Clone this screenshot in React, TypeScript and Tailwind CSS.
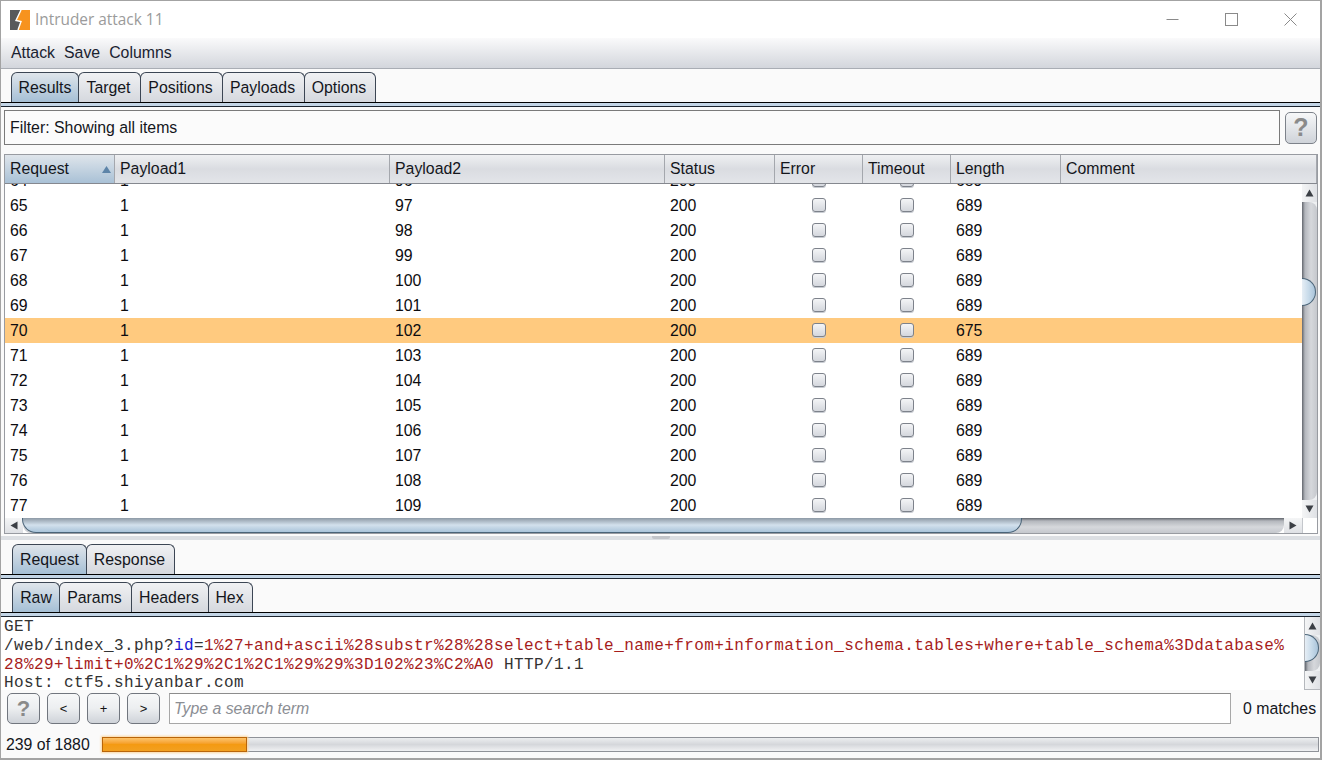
import React from "react";

const tabBase = "h-[30px] -mr-px border border-b-0 border-[#3c4654] rounded-t-[6px] flex items-center justify-center leading-none";
const tabOff = "bg-gradient-to-b from-[#f0f1f3] to-[#d5d8de] text-[#14161c] pr-[2px]";
const tabOn = "bg-gradient-to-b from-[#dfe5eb] to-[#a5bfd5] text-[#14161c] relative z-10";

function Tabs({ items, ml }: { items: [string, number][]; ml: string }) {
  return (
    <div className={`flex items-end ${ml}`}>
      {items.map(([t, w], i) => (
        <div key={t} className={`${tabBase} ${i === 0 ? tabOn : tabOff}`} style={{ width: w }}>
          {t}
        </div>
      ))}
    </div>
  );
}

function TabRule() {
  return <div className="h-[5px] border-t border-b border-t-black border-b-[#1c2530] bg-[#c3d5e6]" />;
}

const cols = [
  ["Request", 111],
  ["Payload1", 275],
  ["Payload2", 275],
  ["Status", 110],
  ["Error", 88],
  ["Timeout", 88],
  ["Length", 110],
  ["Comment", 257],
] as [string, number][];

const rows = Array.from({ length: 14 }, (_, i) => ({
  id: 64 + i,
  p2: 96 + i,
  len: 64 + i === 70 ? 675 : 689,
}));

function Check() {
  return (
    <span className="block -mt-px w-[14px] h-[14px] rounded-[3px] border border-[#7d828b] bg-gradient-to-b from-[#f4f5f7] to-[#d4d7dd] shadow-[0_1px_0_#c8ccd2]" />
  );
}

function Btn({ children, w = 33 }: { children: React.ReactNode; w?: number }) {
  return (
    <div
      className="h-[31px] rounded-[5px] border border-[#71767e] bg-gradient-to-b from-[#f7f8f9] via-[#eceef0] to-[#cfd3d9] flex items-center justify-center text-[#111] text-[13px] leading-none"
      style={{ width: w }}
    >
      {children}
    </div>
  );
}

function Q({ size }: { size: string }) {
  return <span className={`font-bold text-[#8a8a8a] leading-none ${size}`}>?</span>;
}

function ArrowUp() {
  return (
    <svg width="9" height="8" viewBox="0 0 9 8">
      <path d="M4.5 0.5 L8.5 7.5 L0.5 7.5 Z" fill="#3b3f45" />
    </svg>
  );
}
function ArrowDown() {
  return (
    <svg width="9" height="8" viewBox="0 0 9 8">
      <path d="M0.5 0.5 L8.5 0.5 L4.5 7.5 Z" fill="#3b3f45" />
    </svg>
  );
}
function ArrowLeft() {
  return (
    <svg width="8" height="9" viewBox="0 0 8 9">
      <path d="M7.5 0.5 L7.5 8.5 L0.5 4.5 Z" fill="#3b3f45" />
    </svg>
  );
}
function ArrowRight() {
  return (
    <svg width="8" height="9" viewBox="0 0 8 9">
      <path d="M0.5 0.5 L7.5 4.5 L0.5 8.5 Z" fill="#3b3f45" />
    </svg>
  );
}

function VScroll({ top }: { top: number }) {
  return (
    <div className="relative w-[15px] h-full flex flex-col shrink-0 bg-[#eef0f2]">
      <div className="h-[18px] flex items-center justify-center shrink-0 bg-gradient-to-r from-[#f4f5f6] to-[#dfe1e5]">
        <ArrowUp />
      </div>
      <div className="flex-1 rounded-tr-[8px] rounded-br-[8px] bg-[linear-gradient(to_right,#63676e,#b4b7bd_20%,#d6d8dc_60%,#c5c8cd)]" />
      <div className="h-[18px] flex items-center justify-center shrink-0 bg-gradient-to-r from-[#f4f5f6] to-[#dfe1e5]">
        <ArrowDown />
      </div>
      <div
        className="absolute left-0 w-[14px] h-[28px] rounded-r-[14px] border border-l-0 border-[#4a6478] bg-gradient-to-r from-[#e6eef5] via-[#c8dbea] to-[#aac4da]"
        style={{ top }}
      />
    </div>
  );
}

export default function App() {
  return (
    <div
      className="w-[1322px] h-[760px] overflow-hidden flex flex-col bg-[#fafafa] border-2 border-t border-[#a3a3a3] text-[15.85px] text-[#14161c]"
      style={{ fontFamily: '"Liberation Sans", Arial, sans-serif', borderLeftWidth: 1 }}
    >
      {/* Title bar */}
      <div className="h-[37px] shrink-0 bg-white flex items-center pl-[9px]">
        <svg width="20" height="20" viewBox="0 0 20 20" className="shrink-0">
          <rect width="20" height="20" fill="#59595b" />
          <path d="M11 0 H20 V20 H8 L11 11.5 L6 10.5 Z" fill="#f7931e" />
          <path d="M11 0 L6 10.5 L11 11.5 L8 20" fill="none" stroke="#fff" strokeWidth="1.4" />
        </svg>
        <span
          className="ml-[5px] text-[#9b9b9b] text-[15.4px]"
          style={{ fontFamily: '"Open Sans", "Noto Sans", sans-serif' }}
        >
          Intruder attack 11
        </span>
        <div className="ml-auto flex items-center mr-[23px] gap-[46px]">
          <svg width="13" height="13" viewBox="0 0 13 13">
            <path d="M0.5 6.5 H12.5" stroke="#8a8a8a" />
          </svg>
          <svg width="13" height="13" viewBox="0 0 13 13">
            <rect x="0.5" y="0.5" width="12" height="12" fill="none" stroke="#8a8a8a" />
          </svg>
          <svg width="13" height="13" viewBox="0 0 13 13">
            <path d="M0.5 0.5 L12.5 12.5 M12.5 0.5 L0.5 12.5" stroke="#8a8a8a" />
          </svg>
        </div>
      </div>

      {/* Menu */}
      <div className="h-[31px] shrink-0 flex items-center pl-[10px] gap-[9px] bg-gradient-to-b from-[#fafafb] to-[#d3d6dc] border-b border-[#a9adb4] text-[#1a2230]">
        <span>Attack</span>
        <span>Save</span>
        <span>Columns</span>
      </div>

      {/* Main tabs */}
      <div className="pt-[3px] shrink-0">
        <Tabs
          ml="ml-[10px]"
          items={[
            ["Results", 68],
            ["Target", 63],
            ["Positions", 83],
            ["Payloads", 83],
            ["Options", 72],
          ]}
        />
        <TabRule />
      </div>

      {/* Filter */}
      <div className="flex items-center h-[35px] mt-[3px] ml-[3px] mr-[3px] shrink-0 gap-[5px]">
        <div className="w-[1276px] h-[35px] border border-[#7a7a7a] bg-[#fbfbfb] flex items-center pl-[5px]">
          Filter: Showing all items
        </div>
        <div className="w-[32px] h-[32px] rounded-[5px] border border-[#7d828a] bg-gradient-to-b from-[#f7f8f9] to-[#cfd3d9] flex items-center justify-center">
          <Q size="text-[25px]" />
        </div>
      </div>

      {/* Table */}
      <div className="mt-[9px] ml-[3px] w-[1314px] h-[380px] shrink-0 flex flex-col border border-[#989ba1] bg-white">
        <div className="flex h-[29px] shrink-0 border-b border-[#85888f]">
          {cols.map(([c, w], i) => (
            <div
              key={c}
              className={`h-full flex items-center pl-[5px] border-r border-[#a4a7ad] ${
                i === 0
                  ? "bg-gradient-to-b from-[#dfe5eb] to-[#a9c1d6]"
                  : "bg-gradient-to-b from-[#eff0f2] via-[#dadce1] to-[#e3e5e9]"
              } ${i === 0 ? "justify-between pr-[3px]" : ""}`}
              style={{ width: i === 0 ? w - 1 : i === 7 ? w - 1 : w }}
            >
              <span>{c}</span>
              {i === 0 && (
                <svg width="9" height="7" viewBox="0 0 9 7">
                  <path d="M4.5 0 L9 7 L0 7 Z" fill="#5d84a8" />
                </svg>
              )}
            </div>
          ))}
        </div>
        <div className="flex h-[334px] shrink-0">
          <div className="w-[1298px] overflow-hidden h-full">
            <div className="-mt-[16px]">
              {rows.map((r) => (
                <div
                  key={r.id}
                  className={`flex h-[25px] items-center text-[#0c0c10] ${r.id === 70 ? "bg-[#ffca7f]" : "bg-white"}`}
                >
                  <div className="w-[110px] pl-[5px]">{r.id}</div>
                  <div className="w-[275px] pl-[5px]">1</div>
                  <div className="w-[275px] pl-[5px]">{r.p2}</div>
                  <div className="w-[110px] pl-[5px]">200</div>
                  <div className="w-[88px] flex justify-center pr-[1px]">
                    <Check />
                  </div>
                  <div className="w-[88px] flex justify-center pr-[1px]">
                    <Check />
                  </div>
                  <div className="w-[110px] pl-[5px]">{r.len}</div>
                </div>
              ))}
            </div>
          </div>
          <VScroll top={94} />
        </div>
        <div className="flex h-[15px] shrink-0 bg-white">
          <div className="relative w-[1298px] flex h-full border-r border-[#c4c7cc]">
            <div className="w-[18px] h-full flex items-center justify-center bg-gradient-to-b from-[#f4f5f6] to-[#dfe1e5]">
              <ArrowLeft />
            </div>
            <div className="flex-1 rounded-br-[8px] rounded-bl-[8px] bg-[linear-gradient(to_bottom,#63676e,#b4b7bd_20%,#d6d8dc_60%,#c5c8cd)]" />
            <div className="w-[18px] h-full flex items-center justify-center bg-gradient-to-b from-[#f4f5f6] to-[#dfe1e5]">
              <ArrowRight />
            </div>
            <div className="absolute left-[17px] top-0 w-[1000px] h-[15px] rounded-b-[14px] border border-t-0 border-[#4a6478] bg-gradient-to-b from-[#8e9aa6] via-[#d3e1ed] to-[#aac4da]" />
          </div>
        </div>
      </div>

      {/* Splitter */}
      <div className="mt-[2px] h-[4px] shrink-0 bg-[#dcdfe3] flex justify-center">
        <div className="w-[18px] h-[3px] bg-[#c2c5ca] rounded-b-[2px]" />
      </div>

      {/* Request tabs */}
      <div className="pt-[4px] shrink-0">
        <Tabs
          ml="ml-[11px]"
          items={[
            ["Request", 75],
            ["Response", 89],
          ]}
        />
        <TabRule />
      </div>

      {/* Raw tabs */}
      <div className="pt-[3px] shrink-0">
        <Tabs
          ml="ml-[11px]"
          items={[
            ["Raw", 48],
            ["Params", 73],
            ["Headers", 78],
            ["Hex", 45],
          ]}
        />
        <TabRule />
      </div>

      {/* Editor */}
      <div className="h-[73px] shrink-0 flex bg-white">
        <div
          className="w-[1304px] overflow-hidden pl-[3px] pt-[1px] text-[16px] tracking-[0.4px] leading-[18.8px] whitespace-pre text-[#333]"
          style={{ fontFamily: '"Liberation Mono", "Courier New", monospace' }}
        >
          <div>GET</div>
          <div>
            /web/index_3.php?<span className="text-[#1a1ad0]">id</span>=
            <span className="text-[#a61c1c]">
              1%27+and+ascii%28substr%28%28select+table_name+from+information_schema.tables+where+table_schema%3Ddatabase%
            </span>
          </div>
          <div>
            <span className="text-[#a61c1c]">28%29+limit+0%2C1%29%2C1%2C1%29%29%3D102%23%C2%A0</span> HTTP/1.1
          </div>
          <div>Host: ctf5.shiyanbar.com</div>
        </div>
        <div className="border-l border-b border-[#b5b8bd]">
          <VScroll top={17} />
        </div>
      </div>

      {/* Search */}
      <div className="h-[37px] shrink-0 flex items-start pt-[3px] pl-[6px]">
        <div className="flex gap-[7px]">
          <Btn>
            <Q size="text-[22px]" />
          </Btn>
          <Btn>&lt;</Btn>
          <Btn>+</Btn>
          <Btn>&gt;</Btn>
        </div>
        <div className="ml-[9px] w-[1062px] h-[31px] border border-[#a8a8a8] border-t-[#8c8c8c] bg-white flex items-center pl-[4px] italic text-[#8b8e94]">
          Type a search term
        </div>
        <span className="ml-[12px] h-[31px] flex items-center">0 matches</span>
      </div>

      {/* Progress */}
      <div className="mt-[10px] h-[15px] shrink-0 flex items-center pl-[5px]">
        <span className="w-[96px] shrink-0">239 of 1880</span>
        <div className="w-[1217px] h-[15px] border border-[#8f9298] bg-gradient-to-b from-[#eceef0] via-[#d5d7db] to-[#f0f1f3] flex">
          <div className="w-[145px] h-[15px] -ml-px -mt-px shrink-0 border border-[#b9650a] bg-gradient-to-b from-[#fdc46a] via-[#f49a12] to-[#f2a020] shadow-[0_0_2px_1px_#fbd7a0]" />
        </div>
      </div>
    </div>
  );
}
